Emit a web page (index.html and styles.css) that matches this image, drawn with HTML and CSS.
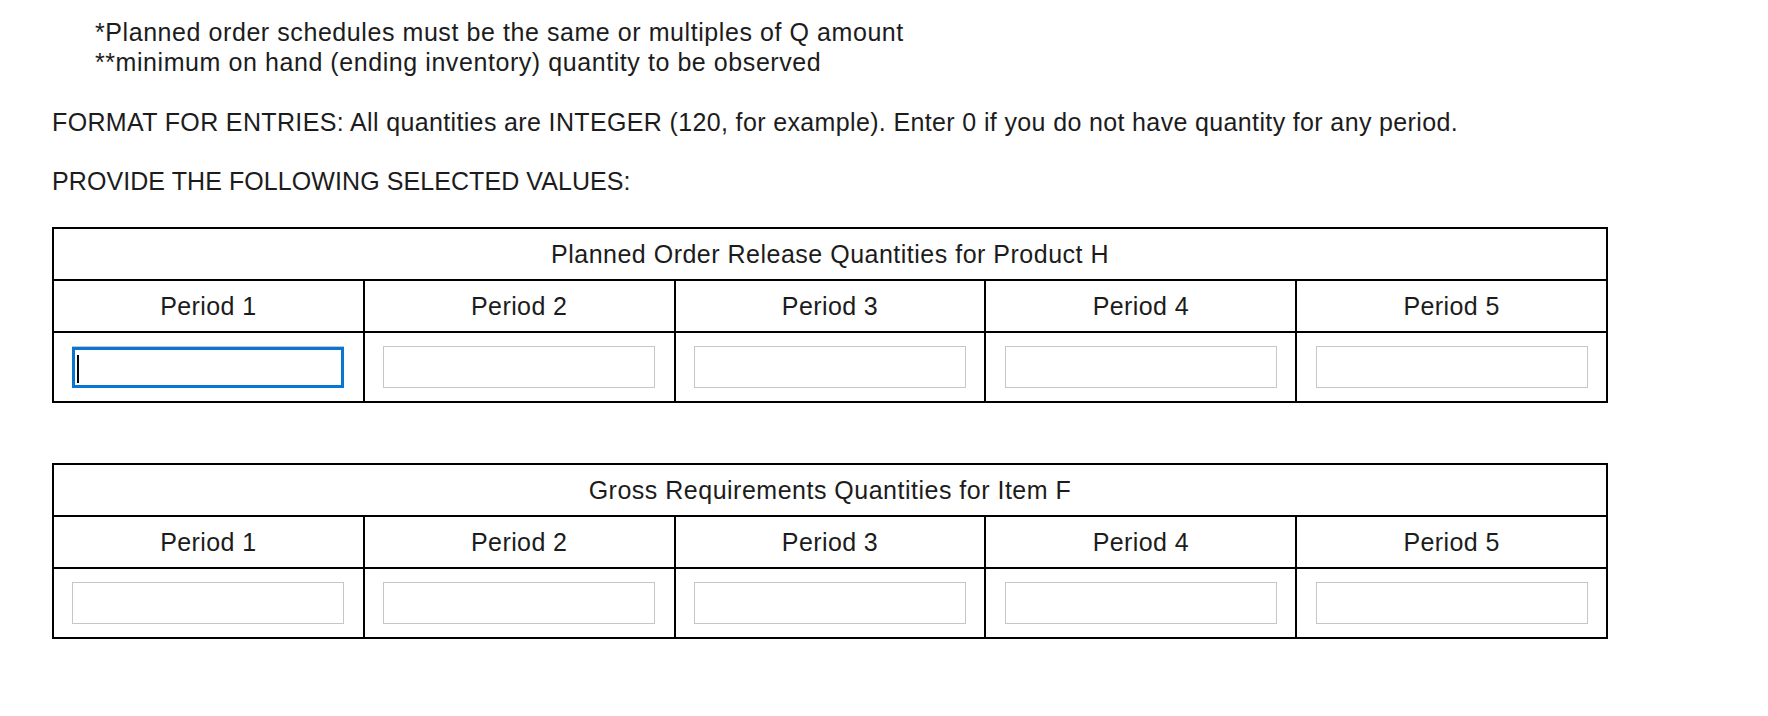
FILE: index.html
```html
<!DOCTYPE html>
<html lang="en">
<head>
<meta charset="utf-8">
<title>MRP entries</title>
<link rel="stylesheet" href="styles.css">
</head>
<body>
<div class="page">
  <div class="notes">
    <p>*Planned order schedules must be the same or multiples of Q amount</p>
    <p>**minimum on hand (ending inventory) quantity to be observed</p>
  </div>
  <p class="format">FORMAT FOR ENTRIES: All quantities are INTEGER (120, for example). Enter 0 if you do not have quantity for any period.</p>
  <p class="provide">PROVIDE THE FOLLOWING SELECTED VALUES:</p>

  <table class="grid">
    <tr class="title-row"><th colspan="5">Planned Order Release Quantities for Product H</th></tr>
    <tr class="period-row"><th>Period 1</th><th>Period 2</th><th>Period 3</th><th>Period 4</th><th>Period 5</th></tr>
    <tr class="input-row">
      <td><span class="field focused"><input type="text" class="box" aria-label="Product H period 1"><span class="caret"></span></span></td>
      <td><span class="field"><input type="text" class="box" aria-label="Product H period 2"></span></td>
      <td><span class="field"><input type="text" class="box" aria-label="Product H period 3"></span></td>
      <td><span class="field"><input type="text" class="box" aria-label="Product H period 4"></span></td>
      <td><span class="field"><input type="text" class="box" aria-label="Product H period 5"></span></td>
    </tr>
  </table>

  <table class="grid second">
    <tr class="title-row"><th colspan="5">Gross Requirements Quantities for Item F</th></tr>
    <tr class="period-row"><th>Period 1</th><th>Period 2</th><th>Period 3</th><th>Period 4</th><th>Period 5</th></tr>
    <tr class="input-row">
      <td><span class="field"><input type="text" class="box" aria-label="Item F period 1"></span></td>
      <td><span class="field"><input type="text" class="box" aria-label="Item F period 2"></span></td>
      <td><span class="field"><input type="text" class="box" aria-label="Item F period 3"></span></td>
      <td><span class="field"><input type="text" class="box" aria-label="Item F period 4"></span></td>
      <td><span class="field"><input type="text" class="box" aria-label="Item F period 5"></span></td>
    </tr>
  </table>
</div>
</body>
</html>
```

FILE: styles.css
```css
html, body {
  margin: 0;
  padding: 0;
  background: #ffffff;
}

body {
  font-family: "Liberation Sans", Arial, Helvetica, sans-serif;
  font-size: 25px;
  letter-spacing: 0.4px;
  color: #1c1c1c;
}

.page {
  padding: 17px 0 40px 52px;
}

p {
  margin: 0;
  line-height: 30px;
}

.notes {
  padding-left: 43px;
  letter-spacing: 0.57px;
}

.format {
  margin-top: 30px;
  letter-spacing: 0.36px;
}

.provide {
  margin-top: 29px;
  letter-spacing: 0.08px;
}

.grid {
  margin-top: 31px;
  width: 1556px;
  border-collapse: collapse;
  border: 2px solid #000;
  table-layout: fixed;
}

.grid.second {
  margin-top: 60px;
}

.grid th,
.grid td {
  border: 2px solid #000;
  padding: 0;
  text-align: center;
  vertical-align: middle;
  font-weight: normal;
}

.title-row th {
  height: 50px;
  letter-spacing: 0.5px;
}

.period-row th {
  height: 50px;
}

.input-row td {
  height: 68px;
}

.field {
  position: relative;
  display: inline-block;
  vertical-align: middle;
  width: 272px;
  height: 42px;
}

.box {
  display: block;
  box-sizing: border-box;
  width: 272px;
  height: 42px;
  margin: 0;
  padding: 0 6px;
  border: 1px solid #c6c6c6;
  border-radius: 0;
  background: #fff;
  font: inherit;
  outline: none;
}

.focused::before {
  content: "";
  position: absolute;
  left: 0;
  right: 0;
  top: 1px;
  bottom: 0;
  border: 3px solid #0777d3;
  pointer-events: none;
}

.caret {
  position: absolute;
  left: 5px;
  top: 9px;
  width: 2px;
  height: 28px;
  background: #000;
}
```
